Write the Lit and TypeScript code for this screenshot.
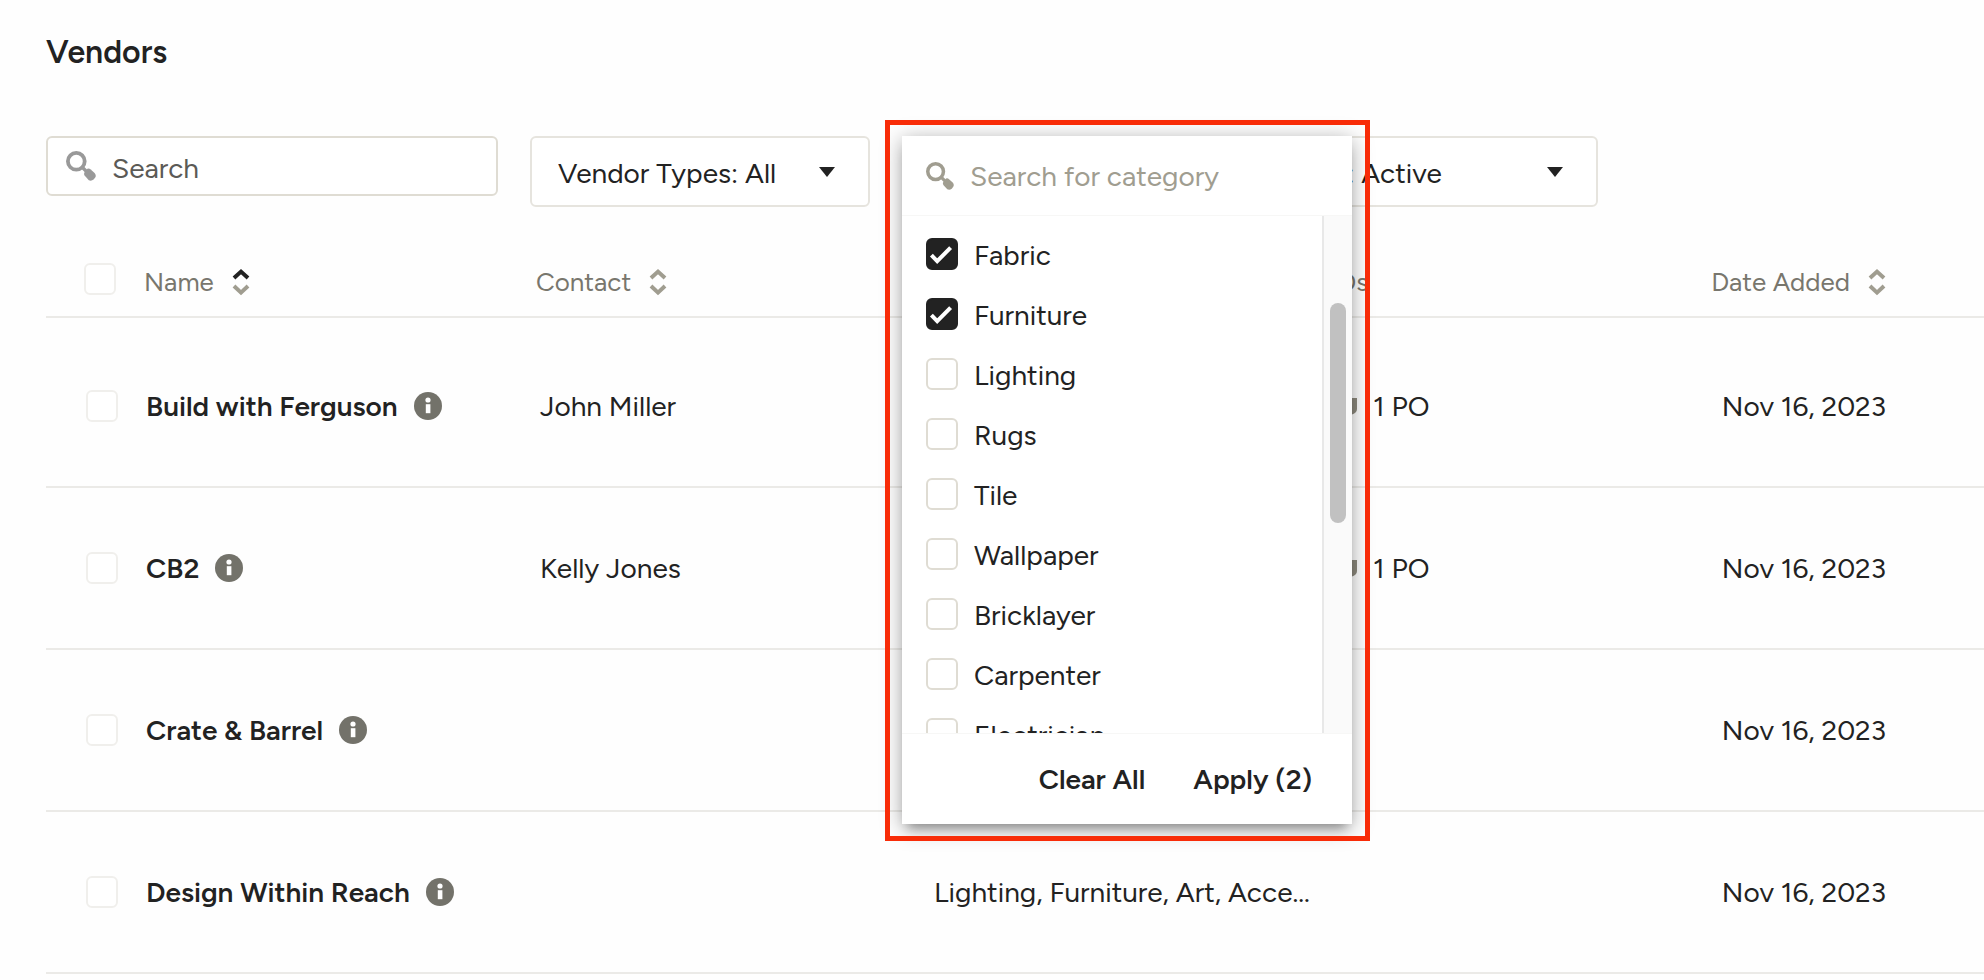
import { LitElement, html, css, nothing } from "lit";
import { customElement, property, state } from "lit/decorators.js";

interface Vendor {
  name: string;
  contact: string;
  categories: string;
  orders: string;
  added: string;
}

const VENDORS: Vendor[] = [
  { name: "Build with Ferguson", contact: "John Miller", categories: "", orders: "1 PO", added: "Nov 16, 2023" },
  { name: "CB2", contact: "Kelly Jones", categories: "", orders: "1 PO", added: "Nov 16, 2023" },
  { name: "Crate & Barrel", contact: "", categories: "", orders: "", added: "Nov 16, 2023" },
  {
    name: "Design Within Reach",
    contact: "",
    categories: "Lighting, Furniture, Art, Acce...",
    orders: "",
    added: "Nov 16, 2023",
  },
];

const CATEGORIES = [
  "Fabric",
  "Furniture",
  "Lighting",
  "Rugs",
  "Tile",
  "Wallpaper",
  "Bricklayer",
  "Carpenter",
  "Electrician",
];

const searchIcon = html`<svg class="search-icon" viewBox="0 0 30 30" aria-hidden="true">
  <circle cx="10.3" cy="10.3" r="8.4" fill="none" stroke="currentColor" stroke-width="3.8" />
  <path d="M16.5 16.5L21 21" stroke="currentColor" stroke-width="3.4" />
  <path
    d="M21.4 17.8q1.6-.8 3 .4l4.2 3.8q2 2.4.6 4.6l-1.6 2q-2.4 1.8-4.8.6l-4-4.4q-1.2-1.6-.4-3.2z"
    fill="currentColor"
  />
</svg>`;

const caretIcon = html`<svg class="caret" viewBox="0 0 16 10" aria-hidden="true">
  <path d="M0 0H16L8 10Z" fill="currentColor" />
</svg>`;

const infoIcon = html`<svg class="info" viewBox="0 0 28 28" aria-hidden="true">
  <circle cx="14" cy="14" r="14" fill="#73726a" />
  <circle cx="14" cy="8" r="2.6" fill="#fff" />
  <rect x="11.8" y="12.2" width="4.6" height="9" fill="#fff" />
</svg>`;

const orderIcon = html`<svg class="order-icon" viewBox="0 0 32 28" aria-hidden="true">
  <path d="M4 6h28v11q0 4-5 5.4H9q-5-1.4-5-5.4z" fill="#8d8a7e" />
</svg>`;

/** Tick box with the product's rounded outline and dark checked state. */
const checkboxStyles = css`
  .box {
    appearance: none;
    display: block;
    flex: none;
    box-sizing: border-box;
    width: 32px;
    height: 32px;
    margin: 0;
    border: 2px solid #f0efec;
    border-radius: 6px;
    background: #fff;
  }
  .box.strong {
    margin-bottom: 2px;
    border-color: #dfdcd3;
  }
  .box:checked {
    border-color: #222;
    background: #222
      url("data:image/svg+xml,%3Csvg xmlns='http://www.w3.org/2000/svg' viewBox='0 0 28 28'%3E%3Cpath d='M3.4 15.2l5.8 6L22.6 7.6' fill='none' stroke='white' stroke-width='4'/%3E%3C/svg%3E")
      center / 28px 28px no-repeat;
  }
`;

@customElement("sort-icon")
export class SortIcon extends LitElement {
  @property() direction = "";

  static styles = css`
    :host {
      display: block;
      flex: none;
      width: 18px;
      height: 28px;
      color: #a09d90;
    }
    .icon {
      display: block;
      width: 18px;
      height: 28px;
      fill: none;
      stroke: currentColor;
      stroke-width: 4;
    }
    .active {
      stroke: #222;
    }
  `;

  render() {
    return html`<svg class="icon" viewBox="0 0 18 28" aria-hidden="true">
      <path class=${this.direction === "asc" ? "active" : ""} d="M2 10L9 3.6L16 10" />
      <path d="M2 18L9 24.6L16 18" />
    </svg>`;
  }
}

@customElement("category-menu")
export class CategoryMenu extends LitElement {
  @state() private selected = new Set(["Fabric", "Furniture"]);

  static styles = [
    checkboxStyles,
    css`
      :host {
        display: block;
        box-sizing: border-box;
        background: #fff;
        box-shadow:
          0 10px 10px -6px rgba(0, 0, 0, 0.25),
          0 4px 20px rgba(0, 0, 0, 0.35);
      }
      .search {
        display: flex;
        align-items: center;
        gap: 16px;
        height: 80px;
        padding: 0 24px;
        box-sizing: border-box;
        border-bottom: 1px solid #f7f7f6;
        color: #a09d90;
      }
      .search-icon {
        flex: none;
        width: 28px;
        height: 28px;
      }
      .field {
        flex: 1;
        min-width: 0;
        padding: 0;
        border: 0;
        outline: 0;
        background: none;
        color: #222;
        font: inherit;
      }
      .field::placeholder {
        color: #a09d90;
        opacity: 1;
      }
      .scroller {
        display: flex;
        height: 517px;
        overflow: hidden;
      }
      .options {
        flex: 1;
        margin: 0;
        padding: 9px 24px;
        list-style: none;
      }
      .option {
        display: flex;
        align-items: center;
        gap: 16px;
        height: 60px;
        cursor: pointer;
      }
      .track {
        box-sizing: border-box;
        width: 30px;
        padding: 87px 6px 0;
        border-left: 2px solid #e8e8e8;
        background: #fafafa;
      }
      .thumb {
        width: 16px;
        height: 220px;
        border-radius: 8px;
        background: #c1c1c1;
      }
      .actions {
        display: flex;
        justify-content: flex-end;
        gap: 48px;
        padding: 28px 40px;
        border-top: 1px solid #f7f7f6;
      }
      .action {
        padding: 0;
        border: 0;
        background: none;
        color: #222;
        font: inherit;
        font-weight: 600;
        line-height: 34px;
        cursor: pointer;
      }
    `,
  ];

  private toggle(name: string) {
    const next = new Set(this.selected);
    if (!next.delete(name)) next.add(name);
    this.selected = next;
  }

  render() {
    return html`
      <label class="search">
        ${searchIcon}
        <input class="field" type="text" aria-label="Search for category" placeholder="Search for category" />
      </label>
      <div class="scroller">
        <ul class="options">
          ${CATEGORIES.map(
            (name) => html`<li>
              <label class="option">
                <input
                  class="box strong"
                  type="checkbox"
                  .checked=${this.selected.has(name)}
                  @change=${() => this.toggle(name)}
                />
                <span>${name}</span>
              </label>
            </li>`
          )}
        </ul>
        <div class="track"><div class="thumb"></div></div>
      </div>
      <div class="actions">
        <button class="action" @click=${() => (this.selected = new Set())}>Clear All</button>
        <button class="action">Apply (${this.selected.size})</button>
      </div>
    `;
  }
}

@customElement("app-root")
export class AppRoot extends LitElement {
  static styles = [
    checkboxStyles,
    css`
      :host {
        display: block;
        min-height: 100vh;
        padding: 28px 0 0 46px;
        box-sizing: border-box;
        overflow: hidden;
        background: #fefefe;
        color: #222;
        font-family: Figtree, Lato, "Liberation Sans", sans-serif;
        font-size: 28px;
        line-height: 36px;
      }
      .title {
        margin: 0 0 60px;
        font-size: 32px;
        font-weight: 600;
        line-height: 48px;
      }
      .filters {
        display: flex;
        align-items: flex-start;
        gap: 32px;
      }
      .search {
        display: flex;
        align-items: center;
        gap: 16px;
        box-sizing: border-box;
        width: 452px;
        height: 60px;
        padding: 0 18px;
        border: 2px solid #dfdcd3;
        border-radius: 6px;
        background: #fff;
        color: #999;
      }
      .search-icon {
        flex: none;
        width: 30px;
        height: 30px;
      }
      .field {
        flex: 1;
        min-width: 0;
        padding: 4px 0 0;
        border: 0;
        outline: 0;
        background: none;
        color: #222;
        font: inherit;
      }
      .field::placeholder {
        color: #5b5a56;
        opacity: 1;
      }
      .filter {
        position: relative;
        display: grid;
        grid-template-columns: 1fr auto;
        align-items: center;
        width: 340px;
      }
      .filter.narrow {
        width: 304px;
      }
      .filter.wide {
        width: 360px;
      }
      .select {
        appearance: none;
        grid-area: 1 / 1 / 2 / 3;
        box-sizing: border-box;
        width: 100%;
        height: 71px;
        padding: 2px 64px 0 26px;
        border: 2px solid #e6e4de;
        border-radius: 6px;
        background: #fff;
        color: inherit;
        font: inherit;
      }
      .caret {
        grid-area: 1 / 2;
        width: 16px;
        height: 10px;
        margin-right: 35px;
        pointer-events: none;
      }
      .menu {
        position: absolute;
        z-index: 2;
        top: 0;
        left: 0;
        width: 450px;
      }
      .highlight {
        position: absolute;
        z-index: 3;
        inset: -16px -18px -17px -17px;
        border: 5px solid #f82c08;
        pointer-events: none;
      }
      .table {
        width: 100%;
        margin-top: 40px;
        border-collapse: separate;
        border-spacing: 0;
        table-layout: fixed;
      }
      .col-check {
        width: 98px;
      }
      .col-name {
        width: 392px;
      }
      .col-contact {
        width: 394px;
      }
      .col-category {
        width: 391px;
      }
      .col-orders {
        width: 240px;
      }
      .head {
        height: 69px;
        padding: 0;
        border-bottom: 2px solid #ebeae7;
        color: #78766d;
        font-size: 26px;
        font-weight: 400;
        text-align: left;
      }
      .head.check {
        height: auto;
        padding: 16px 0 0 38px;
        vertical-align: top;
      }
      .sort {
        display: flex;
        align-items: center;
        gap: 18px;
        padding: 0;
        border: 0;
        background: none;
        color: inherit;
        font: inherit;
        cursor: pointer;
      }
      .cell {
        height: 160px;
        padding: 0 0 0 4px;
        border-bottom: 2px solid #ebeae7;
        white-space: nowrap;
      }
      .first .cell {
        padding-top: 8px;
      }
      .cell.title-cell {
        padding-left: 2px;
      }
      .cell.check {
        padding-left: 40px;
      }
      .head.date,
      .cell.date {
        padding-right: 98px;
        text-align: right;
      }
      .date .sort {
        margin-left: auto;
      }
      .name,
      .orders {
        display: flex;
        align-items: center;
        gap: 16px;
      }
      .name {
        font-weight: 600;
      }
      .info-button {
        display: block;
        padding: 0;
        border: 0;
        background: none;
        cursor: pointer;
      }
      .info {
        display: block;
        width: 28px;
        height: 28px;
      }
      .order-icon {
        display: block;
        flex: none;
        width: 32px;
        height: 28px;
      }
    `,
  ];

  private filter(label: string, kind: string, menu = false) {
    return html`<div class="filter ${kind}">
      <select class="select" aria-label=${label.split(":")[0]}>
        <option>${label}</option>
      </select>
      ${caretIcon}
      ${menu ? html`<div class="menu"><category-menu></category-menu><div class="highlight"></div></div>` : nothing}
    </div>`;
  }

  private heading(label: string, direction = "") {
    return html`<button class="sort">
      <span>${label}</span><sort-icon direction=${direction}></sort-icon>
    </button>`;
  }

  render() {
    return html`
      <h1 class="title">Vendors</h1>
      <div class="filters">
        <label class="search">
          ${searchIcon}
          <input class="field" type="text" aria-label="Search" placeholder="Search" />
        </label>
        ${this.filter("Vendor Types: All", "")} ${this.filter("Categories: 2", "narrow", true)}
        ${this.filter("Status: Active", "wide")}
      </div>
      <table class="table">
        <colgroup>
          <col class="col-check" />
          <col class="col-name" />
          <col class="col-contact" />
          <col class="col-category" />
          <col class="col-orders" />
          <col />
        </colgroup>
        <thead>
          <tr>
            <th class="head check"><input class="box" type="checkbox" aria-label="Select all vendors" /></th>
            <th class="head">${this.heading("Name", "asc")}</th>
            <th class="head">${this.heading("Contact")}</th>
            <th class="head"></th>
            <th class="head">POs</th>
            <th class="head date">${this.heading("Date Added")}</th>
          </tr>
        </thead>
        <tbody>
          ${VENDORS.map(
            (v, i) => html`<tr class=${i === 0 ? "first" : ""}>
              <td class="cell check"><input class="box" type="checkbox" aria-label="Select ${v.name}" /></td>
              <td class="cell title-cell">
                <div class="name">
                  <span>${v.name}</span>
                  <button class="info-button" aria-label="About ${v.name}">${infoIcon}</button>
                </div>
              </td>
              <td class="cell">${v.contact}</td>
              <td class="cell">${v.categories}</td>
              <td class="cell">
                ${v.orders ? html`<div class="orders">${orderIcon}<span>${v.orders}</span></div>` : nothing}
              </td>
              <td class="cell date">${v.added}</td>
            </tr>`
          )}
        </tbody>
      </table>
    `;
  }
}
